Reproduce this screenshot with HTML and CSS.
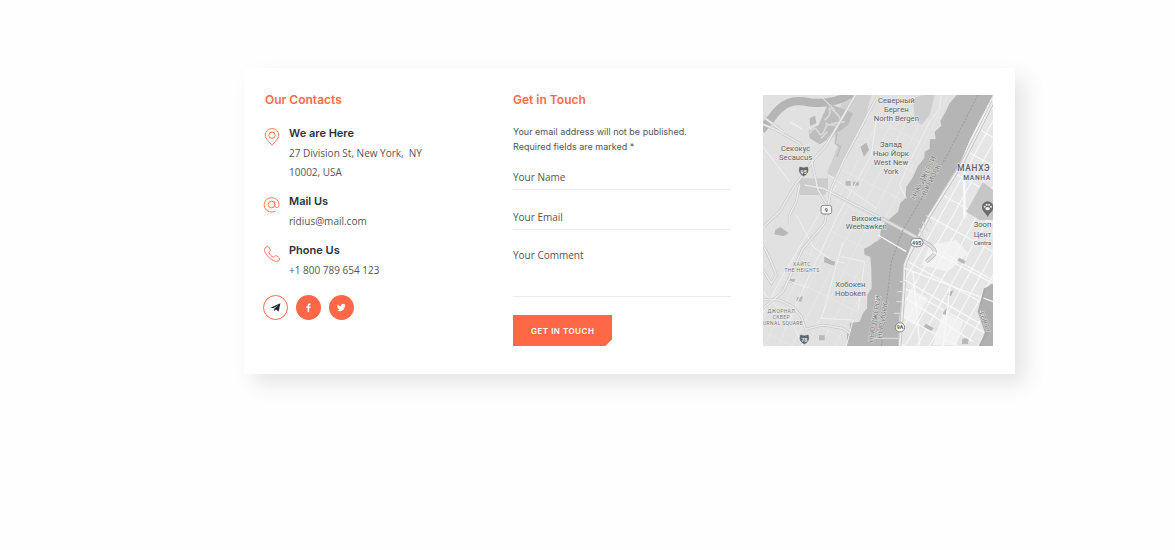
FILE: index.html
```html
<!DOCTYPE html>
<html lang="en">
<head>
<meta charset="utf-8">
<title>Contacts</title>
<link rel="stylesheet" href="styles.css">
</head>
<body>
<main class="card">
  <section class="contacts">
    <h2 class="title">Our Contacts</h2>
    <ul class="list">
      <li class="item">
        <svg class="icon" viewBox="0 0 18 18"><path d="M9 17.3C7 14.5 2.2 10.8 2.2 7a6.8 6.4 0 0 1 13.6 0c0 3.8-4.8 7.500-6.800 10.300z"/><circle cx="9" cy="7.200" r="3.200"/></svg>
        <div><h3 class="name">We are Here</h3><p class="text">27 Division St, New York,&nbsp; NY<br>10002, USA</p></div>
      </li>
      <li class="item">
        <svg class="icon" viewBox="0 0 18 18"><circle cx="8.500" cy="8.500" r="3.300"/><path d="M11.800 5v4.300c0 3.200 4.300 3 4.300-.6A7.500 7.200 0 1 0 12.500 15"/></svg>
        <div><h3 class="name">Mail Us</h3><p class="text">ridius@mail.com</p></div>
      </li>
      <li class="item">
        <svg class="icon" viewBox="0 0 18 18"><path d="M4.300 1.300c.7-.4 3.500 3.400 3 4.400C7 6.500 5.700 6.800 6 7.800c.5 1.700 2.700 3.900 4.300 4.300 1 .2 1.300-1.400 2.300-1.500 1-.1 4.600 2.500 4.300 3.300-.7 2-2.600 3-4.400 2.500C7.500 15 2.800 10 1.600 5.600 1.100 3.800 2.500 1.900 4.300 1.300z"/></svg>
        <div><h3 class="name">Phone Us</h3><p class="text">+1 800 789 654 123</p></div>
      </li>
    </ul>
    <nav class="social">
      <a class="round outline" href="#" aria-label="Telegram"><svg viewBox="0 0 12 12"><path d="M.8 6 11.300 1.400 9.500 10.400 6.400 8.200 4.900 10.200 4.500 7.400 9 3.500 3.400 6.900z"/></svg></a>
      <a class="round" href="#" aria-label="Facebook"><svg viewBox="0 0 12 12"><path d="M5 10.500V6.500H3.600V4.900H5V3.700C5 2.200 5.900 1.500 7.200 1.500h1.200v1.600h-.8c-.7 0-.9.3-.9.900v.9h1.700l-.3 1.600H6.700v4z"/></svg></a>
      <a class="round" href="#" aria-label="Twitter"><svg viewBox="0 0 12 12"><path d="M10.600 3l-1 1C9.700 7.500 7.200 10 4.300 10c-1.200 0-2.200-.3-3-.8 1 0 1.900-.2 2.600-.8-.9-.1-1.500-.6-1.800-1.300h.8C2 6.800 1.400 6.100 1.400 5.100l.8.200C1.300 4.600 1.200 3.500 1.700 2.600 2.700 3.800 4 4.500 5.700 4.600 5.400 3.200 6.400 2 7.600 2c.6 0 1.100.2 1.500.6l1.200-.4-.8 1z"/></svg></a>
    </nav>
  </section>
  <section class="touch">
    <h2 class="title">Get in Touch</h2>
    <p class="note">Your email address will not be published. Required fields are marked *</p>
    <form class="form">
      <input class="field" type="text" aria-label="Your Name" placeholder="Your Name">
      <input class="field" type="email" aria-label="Your Email" placeholder="Your Email">
      <textarea class="field comment" aria-label="Your Comment" placeholder="Your Comment"></textarea>
      <button class="send" type="submit">GET IN TOUCH</button>
    </form>
  </section>
  <svg class="map" viewBox="0 0 690 753" role="img" aria-label="Map of Hoboken and West New York">
    <defs>
      <pattern id="blocks" width="32" height="75" patternUnits="userSpaceOnUse" patternTransform="rotate(29)"><path d="M0 0V75M0 0H32" fill="none" stroke="#fafafa" stroke-width="6"/></pattern>
      <pattern id="town" width="38" height="90" patternUnits="userSpaceOnUse" patternTransform="rotate(27)"><path d="M0 0V90M0 0H38" fill="none" stroke="#ebebeb" stroke-width="3"/></pattern>
    </defs>
    <rect width="690" height="753" fill="#e1e1e1"/>
    <path d="M340 0H590L390 380 300 430 280 753H0V590L170 400 220 250z" fill="url(#town)"/>
    <path d="M245 0H325L300 95 260 170 215 245 190 240 225 150 205 105z" fill="#d0d0d0"/>
    <path d="M-5 105 25 70C60 20 90 12 140 22 180 27 225 22 265-5" fill="none" stroke="#b5b5b5" stroke-width="25"/>
    <path d="M197 25 240 42 270 55 255 90 222 115 200 130 170 148 140 130 137 108 167 90 182 55z" fill="#bdbdbd"/>
    <path d="M140 115q15-25 25-5t20-5 5-20 20 5-5 30 22-8M185 75q20-15 15-30t20 10-5 30 30-5M175 130q8-10 18-20" fill="none" stroke="#d9d9d9" stroke-width="5"/>
    <path d="M222 115l-5 30 15 10-10 30" fill="none" stroke="#bdbdbd" stroke-width="5"/>
    <path d="M140 70l16-8 4 22-18 9z M292 155l18-12 8 22-15 20z M248 258h15v14h-15z M270 260h17v12h-17z M37 404l15-8 25 18-15 10-28-6z M184 485l34 12-5 15-30-10z M82 551l16 2-8 12-13-3z M102 607l18-3-5 16-15-1z M168 721h17v15h-17z" fill="#b8b8b8"/>
    <path d="M110 250H195V278L185 300H110z" fill="#cccccc"/>
    <path d="M450 10 480 0H515L500 60 475 90 455 75z" fill="#cdcdcd"/>
    <path d="M581 0 560 25 548 50 532 78 535 93 515 110 518 132 501 133 500 162 485 170 484 190 465 213 448 250 430 275 427 310 412 325 405 350 380 372 355 395 350 430 325 450 303 462 305 480 322 485 325 520 326 580 313 600 312 640 300 655 290 680 260 684 262 710 252 715 252 753H406L409 665 419 595 424 515 441 475 471 415 501 355 541 285 591 205 621 135 651 75 690 0z" fill="#b5b5b5"/>
    <path d="M690 0 651 75 621 135 591 205 541 285 501 355 441 475 424 515 419 595 406 753H650L668 705 651 640 666 580 690 565z" fill="#e6e6e6"/>
    <path d="M690 0 651 75 621 135 591 205 541 285 501 355 441 475 424 515 419 595 406 753H650L668 705 651 640 666 580 690 565z" fill="url(#blocks)"/>
    <path d="M500 450l80-15 35 40-60 55-80-20zM440 580l55 30-40 80-35-20zM540 650l60 30-20 70h-70z" fill="#f5f5f5" opacity=".8"/>
    <path d="M650 278 660 262 690 285V375H650L610 350z" fill="#c6c6c6"/>
    <path d="M604 215V370" fill="none" stroke="#fafafa" stroke-width="7"/>
    <path d="M588 488l20 10-5 9-20-10zM560 590l12-5-8 18-12-4zM545 645l8-7-5 22-9-3zM488 686l24 13-7 9-22-12zM598 731l20-3-3 20-18-1z" fill="#b8b8b8"/>
    <path d="M690 565 666 580 651 640 668 705 650 753H690z" fill="#b0b0b0"/>
    <g fill="none" stroke="#f0f0f0" stroke-width="3">
      <path d="M0 155 80 260M85 80l35 24-40-22M170 0l45 45M190 235 340 340M100 360l50 95 55 40 40 10M0 655 60 540 220 270M65 705 140 540 225 360 325 180 340 70M60 552l75 27M240 440 190 620 175 670 270 675 250 753M235 485l70 15-20 145M0 590l90 100 30 63M430 310 410 270 440 200 500 80 530 40 535 0"/>
    </g>
    <g fill="none">
      <path d="M5 392 50 350 100 265 120 240 155 190 190 150 280-5M0 88 40 105 110 145 145 195 165 285 190 325M0 65 60 110M125 270 180 280 365 375M110 270 100 320 80 360 80 390M0 614 50 615 90 635 115 665 130 710M130 702 180 690 240 700 260 715M345 0 245 190 205 280 185 385 120 460 60 590 0 640M0 450l20 40 20 50-15 25-25-40" stroke="#c4c4c4" stroke-width="8"/>
      <path d="M5 392 50 350 100 265 120 240 155 190 190 150 280-5M0 88 40 105 110 145 145 195 165 285 190 325M0 65 60 110M125 270 180 280 365 375M110 270 100 320 80 360 80 390M0 614 50 615 90 635 115 665 130 710M130 702 180 690 240 700 260 715M345 0 245 190 205 280 185 385 120 460 60 590 0 640M0 450l20 40 20 50-15 25-25-40" stroke="#e9e9e9" stroke-width="5"/>
      <path d="M455 435 425 510 422 590 410 753M690 20 600 200 500 360 440 475" stroke="#bbb" stroke-width="10"/>
      <path d="M455 435 425 510 422 590 410 753M690 20 600 200 500 360 440 475" stroke="#ededed" stroke-width="6"/>
      <path d="M355 370 430 410 500 450Q525 470 510 482L490 500" stroke="#bbb" stroke-width="12"/>
      <path d="M355 370 430 410 500 450Q525 470 510 482L490 500" stroke="#dedede" stroke-width="8"/>
      <path d="M425 520 690 620M425 555 650 685M430 610 630 740M450 530 470 750M560 580 540 753M510 470 690 565M345 420 430 470" stroke="#f8f8f8" stroke-width="4"/>
      <path d="M666 580 647 650 670 715 650 753" stroke="#aaa" stroke-width="6"/>
      <path d="M645 0 550 185 420 405 385 500 355 753" stroke="#8e8e8e" stroke-width="2" stroke-dasharray="7 4"/>
      <path d="M338 440l15-12M410 560h15M403 590h16M400 620h16M394 655h17M320 730h85M468 400l18 30M478 380l18 30M490 360l15 25M338 600v40" stroke="#d8d8d8" stroke-width="4"/>
    </g>
    <g class="place">
      <text x="400" y="24">Северный</text><text x="400" y="51">Берген</text><text x="400" y="77">North Bergen</text>
      <text x="98" y="169">Секокус</text><text x="98" y="194">Secaucus</text>
      <text x="384" y="157">Запад</text><text x="384" y="184">Нью Йорк</text><text x="384" y="210">West New</text><text x="384" y="237">York</text>
      <text x="310" y="377">Вихокен</text><text x="310" y="403">Weehawken</text>
      <text x="262" y="577">Хобокен</text><text x="262" y="603">Hoboken</text>
      <text class="start" x="632" y="397">Зооп</text><text class="start" x="632" y="426">Цент</text><text class="start small" x="632" y="449">Centra</text>
      <text class="start large" x="583" y="228">МАНХЭ</text><text class="start medium" x="601" y="254">MANHA</text>
    </g>
    <g class="area">
      <text x="117" y="513">ХАЙТС</text><text x="117" y="532">THE HEIGHTS</text>
      <text x="55" y="653">ДЖОРНАЛ</text><text x="55" y="671">СКВЕР</text><text class="start" x="0" y="689">URNAL SQUARE</text>
    </g>
    <g class="water">
      <g transform="translate(495 255) rotate(-63)"><text y="-8">НЬЮ-ДЖЕРСИ</text><text y="15">НЬЮ-ЙОРК</text></g>
      <g transform="translate(350 675) rotate(-80)"><text y="-8">НЬЮ-ДЖЕРСИ</text><text y="15">НЬЮ-ЙОРК</text></g>
      <g transform="translate(663 682) rotate(68)"><text y="4">FDR Dr</text></g>
    </g>
    <g stroke="#888" stroke-width="3" fill="#f7f7f7">
      <rect x="174" y="331" width="32" height="26" rx="7"/><rect x="443" y="430" width="37" height="25" rx="12"/><circle cx="411" cy="697" r="14"/>
    </g>
    <g fill="#666" stroke="#eee" stroke-width="2"><path d="M109 214q13 5 26 0 8 22-13 31-21-9-13-31z"/><path d="M111 718q13 5 26 0 8 22-13 31-21-9-13-31z"/></g>
    <g class="route"><text x="190" y="350">9</text><text x="461" y="449">495</text><text x="411" y="703">9A</text><text class="light" x="122" y="236">95</text><text class="light" x="124" y="740">78</text></g>
    <path d="M674 366C666 350 657 350 657 336a17 17 0 0 1 34 0c0 14-9 14-17 30z" fill="#6b6b6b"/>
    <g fill="#eee"><ellipse cx="674" cy="341" rx="7" ry="5"/><circle cx="665" cy="335" r="3"/><circle cx="671" cy="329" r="3"/><circle cx="678" cy="329" r="3"/><circle cx="684" cy="335" r="3"/></g>
  </svg>
</main>
</body>
</html>
```
FILE: styles.css
```css
* { box-sizing: border-box; }
body { margin: 0; background: #fefefe; color: #555; font-family: Inter, "Open Sans", sans-serif; font-size: 9px; }
h2, h3, p, ul { margin: 0; padding: 0; }
.card {
  display: grid;
  grid-template-columns: 216fr 218fr 230fr;
  gap: 32px;
  align-items: start;
  margin: 68px 160px 68px 244px;
  padding: 27px 22px 28px 21px;
  background: #fff;
  box-shadow: 10px 10px 20px rgba(0, 0, 0, .1);
}
.title { color: #ff6b49; font: 600 12px/16px Inter, sans-serif; margin-top: -3px; }
.list { list-style: none; display: grid; gap: 12px; margin-top: 16px; }
.item { display: grid; grid-template-columns: 16px 1fr; gap: 8px; }
.icon { width: 18px; height: 18px; margin: 4px 0 0 -2px; fill: none; stroke: #ff7a5c; stroke-width: 1; }
.name { color: #27313b; font: 600 11px/18px Inter, sans-serif; }
.text { padding-top: 2px; margin-bottom: -2px; font: 10px/19px "Open Sans", sans-serif; }
.social { display: flex; gap: 8px; margin: 17px 0 0 -2px; }
.round { display: grid; place-items: center; width: 25px; height: 25px; border-radius: 50%; background: #ff6846; }
.round svg { width: 11px; height: 11px; fill: #fff; }
.outline { background: #fff; border: 1px solid #ff6846; }
.outline svg { fill: #1d2b36; }
.note { margin-top: 16px; max-width: 190px; line-height: 15px; }
.form { display: flex; flex-direction: column; align-items: flex-start; margin-top: 9px; }
.field { width: 100%; height: 27px; margin: 0 0 13px; padding: 1px 0 0; border: 0; border-bottom: 1px solid #ebebeb; border-radius: 0; background: none; color: #555; font: 10px/16px "Open Sans", sans-serif; outline: 0; resize: none; }
.field::placeholder { color: #555; opacity: 1; }
.comment { height: 54px; padding-top: 4px; margin-bottom: 18px; }
.send { height: 31px; padding: 0 18px; border: 0; background: #ff6846; color: #fff; font: 600 8px/16px Inter, sans-serif; letter-spacing: .5px; clip-path: polygon(0 0, 100% 0, 100% 24px, calc(100% - 7px) 100%, 0 100%); }
.map { display: block; width: 100%; height: auto; overflow: hidden; }
.map text { font-family: Roboto, sans-serif; text-anchor: middle; fill: #606060; stroke: #eee; stroke-width: 3px; paint-order: stroke; }
.place text { font-size: 23px; }
.place .start, .area .start { text-anchor: start; }
.place .small { font-size: 18px; }
.place .medium { font-size: 20px; font-weight: 500; letter-spacing: 2px; }
.place .large { font-size: 25px; font-weight: 500; letter-spacing: 2px; }
.area text { font-size: 15px; letter-spacing: 1px; fill: #777; }
.water text { font-size: 21px; fill: #808080; stroke: #ddd; }
.route text { font-size: 16px; font-weight: 700; stroke: none; }
.route .light { fill: #eee; }
```
